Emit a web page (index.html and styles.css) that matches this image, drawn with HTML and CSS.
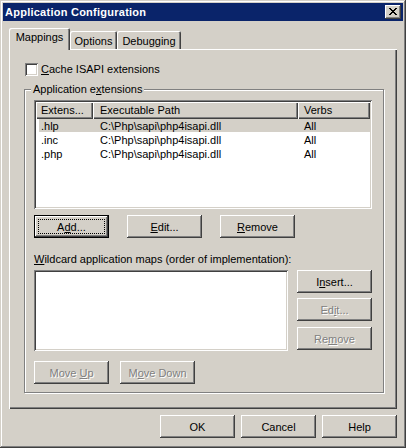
FILE: index.html
```html
<!DOCTYPE html>
<html>
<head>
<meta charset="utf-8">
<title>Application Configuration</title>
<link rel="stylesheet" href="styles.css">
</head>
<body>
<div class="window">
  <div class="titlebar">
    <span class="title">Application Configuration</span>
    <span class="close"><svg width="8" height="7" viewBox="0 0 8 7" shape-rendering="crispEdges"><path d="M0 0h2v1H0z M6 0h2v1H6z M1 1h2v1H1z M5 1h2v1H5z M2 2h4v1H2z M3 3h2v1H3z M2 4h4v1H2z M1 5h2v1H1z M5 5h2v1H5z M0 6h2v1H0z M6 6h2v1H6z" fill="#000"/></svg></span>
  </div>
  <div class="body">
    <div class="tabs">
      <div class="tab active tab-map">Mappings</div>
      <div class="tab tab-opt">Options</div>
      <div class="tab tab-dbg">Debugging</div>
    </div>
    <div class="panel">
      <div class="check-row">
        <span class="checkbox"></span>
        <span class="check-label"><u>C</u>ache ISAPI extensions</span>
      </div>
      <div class="group">
        <div class="glabel">Application e<u>x</u>tensions</div>
        <div class="listview">
          <div class="lv-header">
            <div class="hcell c1">Extens...</div>
            <div class="hcell c2">Executable Path</div>
            <div class="hcell c3">Verbs</div>
          </div>
          <div class="lv-row selected">
            <div class="cell c1">.hlp</div>
            <div class="cell c2">C:\Php\sapi\php4isapi.dll</div>
            <div class="cell c3">All</div>
          </div>
          <div class="lv-row">
            <div class="cell c1">.inc</div>
            <div class="cell c2">C:\Php\sapi\php4isapi.dll</div>
            <div class="cell c3">All</div>
          </div>
          <div class="lv-row">
            <div class="cell c1">.php</div>
            <div class="cell c2">C:\Php\sapi\php4isapi.dll</div>
            <div class="cell c3">All</div>
          </div>
        </div>
        <div class="btn-row">
          <div class="btn default"><span>A<u>d</u>d...</span></div>
          <div class="btn"><span><u>E</u>dit...</span></div>
          <div class="btn"><span><u>R</u>emove</span></div>
        </div>
        <div class="wlabel"><u>W</u>ildcard application maps (order of implementation):</div>
        <div class="wild-row">
          <div class="listbox"></div>
          <div class="side-btns">
            <div class="btn"><span>I<u>n</u>sert...</span></div>
            <div class="btn disabled"><span>Ed<u>i</u>t...</span></div>
            <div class="btn disabled side-last"><span>Re<u>m</u>ove</span></div>
          </div>
        </div>
        <div class="move-row">
          <div class="btn disabled"><span>Move <u>U</u>p</span></div>
          <div class="btn disabled"><span>M<u>o</u>ve Down</span></div>
        </div>
      </div>
    </div>
    <div class="footer">
      <div class="btn"><span>OK</span></div>
      <div class="btn"><span>Cancel</span></div>
      <div class="btn"><span>Help</span></div>
    </div>
  </div>
</div>
</body>
</html>
```

FILE: styles.css
```css
* { box-sizing: border-box; }
html, body { margin: 0; padding: 0; }
body {
  width: 406px;
  height: 448px;
  overflow: hidden;
  background: #D4D0C8;
  font-family: "Liberation Sans", Arial, sans-serif;
  font-size: 11px;
  color: #000;
}
u { text-decoration: underline; text-underline-offset: 1px; }

.window {
  width: 406px;
  height: 448px;
  padding: 3px;
  background: #D4D0C8;
  display: flex;
  flex-direction: column;
  box-shadow: inset -1px -1px #404040, inset 1px 1px #D4D0C8, inset -2px -2px #808080, inset 2px 2px #fff;
}

.titlebar {
  height: 18px;
  flex: none;
  background: #0A246A;
  color: #fff;
  display: flex;
  align-items: center;
  padding: 0 2px 0 2px;
}
.title {
  flex: 1;
  font-weight: bold;
  letter-spacing: 0.25px;
  line-height: 18px;
}
.close {
  width: 16px;
  height: 14px;
  background: #D4D0C8;
  display: flex;
  align-items: flex-start;
  padding: 3px 0 0 4px;
  box-shadow: inset -1px -1px #404040, inset 1px 1px #fff, inset -2px -2px #808080;
}
.close svg { display: block; }

.body {
  flex: 1;
  display: flex;
  flex-direction: column;
  padding: 7px 6px 0 6px;
}

.tabs {
  display: flex;
  align-items: flex-end;
  height: 21px;
  position: relative;
  z-index: 1;
}
.tab {
  height: 18px;
  padding-top: 4px;
  line-height: 13px;
  text-align: center;
  background: #D4D0C8;
  box-shadow: inset 1px 1px #fff, inset -1px 0 #404040, inset -2px 0 #808080;
  border-radius: 2px 2px 0 0;
}
.tab.active {
  height: 22px;
  margin-bottom: -1px;
  padding-top: 3px;
}
.tab-map { width: 61px; }
.tab-opt { width: 47px; }
.tab-dbg { width: 64px; }

.panel {
  height: 360px;
  flex: none;
  padding-top: 14px;
  box-shadow: inset 1px 1px #fff, inset -1px -1px #404040, inset -2px -2px #808080;
}

.check-row {
  display: flex;
  align-items: center;
  height: 13px;
  margin-left: 16px;
}
.checkbox {
  width: 13px;
  height: 13px;
  background: #fff;
  box-shadow: inset 1px 1px #808080, inset -1px -1px #fff, inset 2px 2px #404040, inset -2px -2px #D4D0C8;
}
.check-label {
  margin-left: 3px;
  line-height: 13px;
}

.group {
  width: 360px;
  margin: 13px 0 0 15px;
  border: 1px solid #808080;
  box-shadow: inset 1px 1px #fff, 1px 1px #fff;
  padding: 0 11px 8px 9px;
}
.glabel {
  width: fit-content;
  height: 13px;
  line-height: 13px;
  margin: -7px 0 0 -3px;
  padding: 0 2px;
  background: #D4D0C8;
}

.listview {
  margin-top: 4px;
  height: 109px;
  background: #fff;
  padding: 2px;
  box-shadow: inset 1px 1px #808080, inset -1px -1px #fff, inset 2px 2px #404040, inset -2px -2px #D4D0C8;
}
.lv-header {
  display: flex;
  height: 17px;
}
.hcell {
  background: #D4D0C8;
  line-height: 17px;
  padding-left: 6px;
  white-space: nowrap;
  box-shadow: inset 1px 1px #fff, inset -1px -1px #404040, inset -2px -2px #808080;
}
.c1 { width: 57px; flex: none; padding-left: 5px; }
.c2 { width: 205px; flex: none; padding-left: 7px; }
.c3 { flex: 1; padding-left: 6px; }
.lv-row {
  display: flex;
  height: 14px;
  line-height: 14px;
}
.cell { white-space: nowrap; }
.lv-row.selected {
  background: linear-gradient(to right, #fff 0 3px, #D4D0C8 3px);
  background-size: 100% 13px;
  background-repeat: no-repeat;
}

.btn {
  position: relative;
  width: 75px;
  height: 23px;
  flex: none;
  background: #D4D0C8;
  display: flex;
  align-items: center;
  justify-content: center;
  box-shadow: inset -1px -1px #404040, inset 1px 1px #fff, inset -2px -2px #808080;
  white-space: nowrap;
}
.btn > span { white-space: pre; }
.btn.default {
  box-shadow: inset 0 0 0 1px #000, inset -2px -2px #404040, inset 2px 2px #fff, inset -3px -3px #808080;
}
.btn.default::after {
  content: "";
  position: absolute;
  top: 4px; left: 4px; right: 4px; bottom: 4px;
  border: 1px dotted #000;
}
.btn.disabled {
  color: #808080;
  text-shadow: 1px 1px 0 #fff;
}

.btn-row {
  display: flex;
  gap: 18px;
  margin-top: 6px;
}
.wlabel {
  margin-top: 15px;
  height: 13px;
  line-height: 13px;
}
.wild-row {
  display: flex;
  gap: 9px;
  margin-top: 4px;
}
.listbox {
  width: 254px;
  height: 81px;
  background: #fff;
  box-shadow: inset 1px 1px #808080, inset -1px -1px #fff, inset 2px 2px #404040, inset -2px -2px #D4D0C8;
}
.side-btns {
  display: flex;
  flex-direction: column;
  gap: 5px;
}
.side-btns .side-last { margin-top: 1px; }
.move-row {
  display: flex;
  gap: 11px;
  margin-top: 10px;
}

.footer {
  display: flex;
  justify-content: flex-end;
  gap: 6px;
  margin-top: 6px;
}
```
